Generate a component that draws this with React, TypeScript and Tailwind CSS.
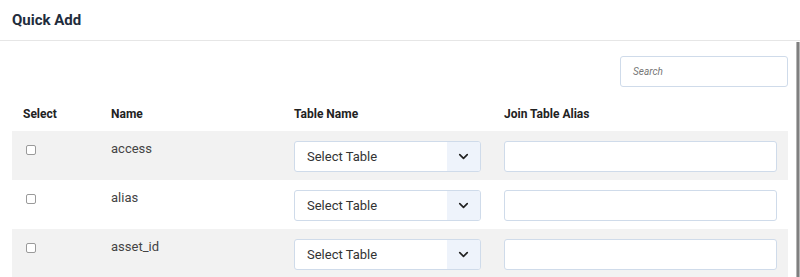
import React from 'react';
import { ChevronDown } from 'lucide-react';

const rows = ['access', 'alias', 'asset_id'];

function TableSelect() {
  return (
    <div className="flex h-[31px] w-[187px] overflow-hidden rounded-[3px] border border-[#cfdbea] bg-white">
      <span className="flex flex-1 items-center pl-[12px] text-[13px] text-[#333]">Select Table</span>
      <span className="flex w-[33px] items-center justify-center bg-[#eef3fb]">
        <ChevronDown size={15} strokeWidth={2.6} className="text-[#222]" />
      </span>
    </div>
  );
}

export default function App() {
  return (
    <div className="h-[277px] w-[800px] overflow-hidden bg-white font-['Roboto',sans-serif]">
      {/* Title bar */}
      <div className="flex h-[41px] items-center border-b border-[#e6e6e6] px-3">
        <h1 className="text-[15px] font-bold text-[#1f2d3d]">Quick Add</h1>
      </div>

      <div className="flex">
        <div className="w-[788px] pl-3">
          {/* Search */}
          <div className="flex justify-end pt-[15px]">
            <div className="flex h-[31px] w-[168px] items-center rounded-[3px] border border-[#cfdbea] pl-[12px] text-[10px] italic text-[#777]">
              Search
            </div>
          </div>

          {/* Header */}
          <div className="mt-[9px] grid h-[35px] grid-cols-[88px_183px_210px_1fr] items-center text-[12px] font-bold text-[#222]">
            <span className="pl-[11px]">Select</span>
            <span className="pl-[11px]">Name</span>
            <span className="pl-[11px]">Table Name</span>
            <span className="pl-[11px]">Join Table Alias</span>
          </div>

          {/* Rows */}
          {rows.map((name, i) => (
            <div
              key={name}
              className={`grid h-[49px] grid-cols-[88px_183px_210px_1fr] ${i % 2 === 0 ? 'bg-[#f2f2f2]' : 'bg-white'}`}
            >
              <div className="pl-[14px] pt-[14px]">
                <div className="h-[10px] w-[10px] rounded-[2px] border border-[#9a9a9a] bg-white" />
              </div>
              <div className="pl-[11px] pt-[9px] text-[13px] leading-[18px] text-[#444]">{name}</div>
              <div className="pl-[11px] pt-[10px]">
                <TableSelect />
              </div>
              <div className="pl-[11px] pr-[11px] pt-[10px]">
                <div className="h-[31px] w-full rounded-[3px] border border-[#cfdbea] bg-white" />
              </div>
            </div>
          ))}
        </div>

        {/* Scrollbar edge */}
        <div className="ml-auto mt-[1px] h-[240px] w-[4px] border-x border-[#b5b5b5] bg-[#7f7f7f]" />
      </div>
    </div>
  );
}
